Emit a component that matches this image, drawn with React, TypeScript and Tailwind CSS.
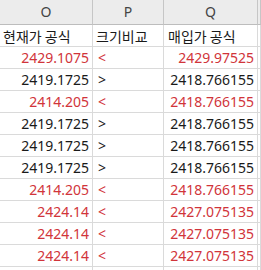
import React from "react";

const RED = "text-[#d1343a]";
const BLK = "text-[#1a1a1a]";

type Row = { o: string; p: string; q: string; oc: boolean; pc: boolean; qc: boolean };

const rows: Row[] = [
  { o: "2429.1075", p: "<", q: "2429.97525", oc: true, pc: true, qc: true },
  { o: "2419.1725", p: ">", q: "2418.766155", oc: false, pc: false, qc: false },
  { o: "2414.205", p: "<", q: "2418.766155", oc: true, pc: true, qc: true },
  { o: "2419.1725", p: ">", q: "2418.766155", oc: false, pc: false, qc: false },
  { o: "2419.1725", p: ">", q: "2418.766155", oc: false, pc: false, qc: false },
  { o: "2419.1725", p: ">", q: "2418.766155", oc: false, pc: false, qc: false },
  { o: "2414.205", p: "<", q: "2418.766155", oc: true, pc: true, qc: true },
  { o: "2424.14", p: "<", q: "2427.075135", oc: true, pc: true, qc: true },
  { o: "2424.14", p: "<", q: "2427.075135", oc: true, pc: true, qc: true },
  { o: "2424.14", p: "<", q: "2427.075135", oc: true, pc: true, qc: true },
];

const cell = "h-[22px] border-b border-r border-[#dadada] flex items-center overflow-hidden whitespace-nowrap";
const hcell = "h-[25px] border-b border-r border-[#c6c6c6] border-b-[#bdbdbd] bg-[#ececec] flex items-center justify-center text-[#444444]";

export default function App() {
  return (
    <div
      className="w-[261px] h-[270px] overflow-hidden bg-white text-[14px] leading-none"
      style={{ fontFamily: '"Noto Sans", "Noto Sans CJK KR", sans-serif' }}
    >
      <div className="grid grid-cols-[93px_71px_94px_1fr]">
        <div className={hcell}>O</div>
        <div className={hcell}>P</div>
        <div className={hcell}>Q</div>
        <div className={hcell}></div>

        <div className={`${cell} pl-[3px] ${BLK}`} style={{ fontFamily: '"Noto Sans CJK KR", sans-serif' }}>현재가 공식</div>
        <div className={`${cell} pl-[3px] ${BLK}`} style={{ fontFamily: '"Noto Sans CJK KR", sans-serif' }}>크기비교</div>
        <div className={`${cell} pl-[4px] ${BLK}`} style={{ fontFamily: '"Noto Sans CJK KR", sans-serif' }}>매입가 공식</div>
        <div className={cell}></div>

        {rows.map((r, i) => (
          <React.Fragment key={i}>
            <div className={`${cell} justify-end pr-[3px] ${r.oc ? RED : BLK}`}>{r.o}</div>
            <div className={`${cell} pl-[5px] ${r.pc ? RED : BLK}`}>{r.p}</div>
            <div className={`${cell} justify-end pr-[3px] ${r.qc ? RED : BLK}`}>{r.q}</div>
            <div className={cell}></div>
          </React.Fragment>
        ))}

        <div className={cell}></div>
        <div className={cell}></div>
        <div className={cell}></div>
        <div className={cell}></div>
      </div>
    </div>
  );
}
